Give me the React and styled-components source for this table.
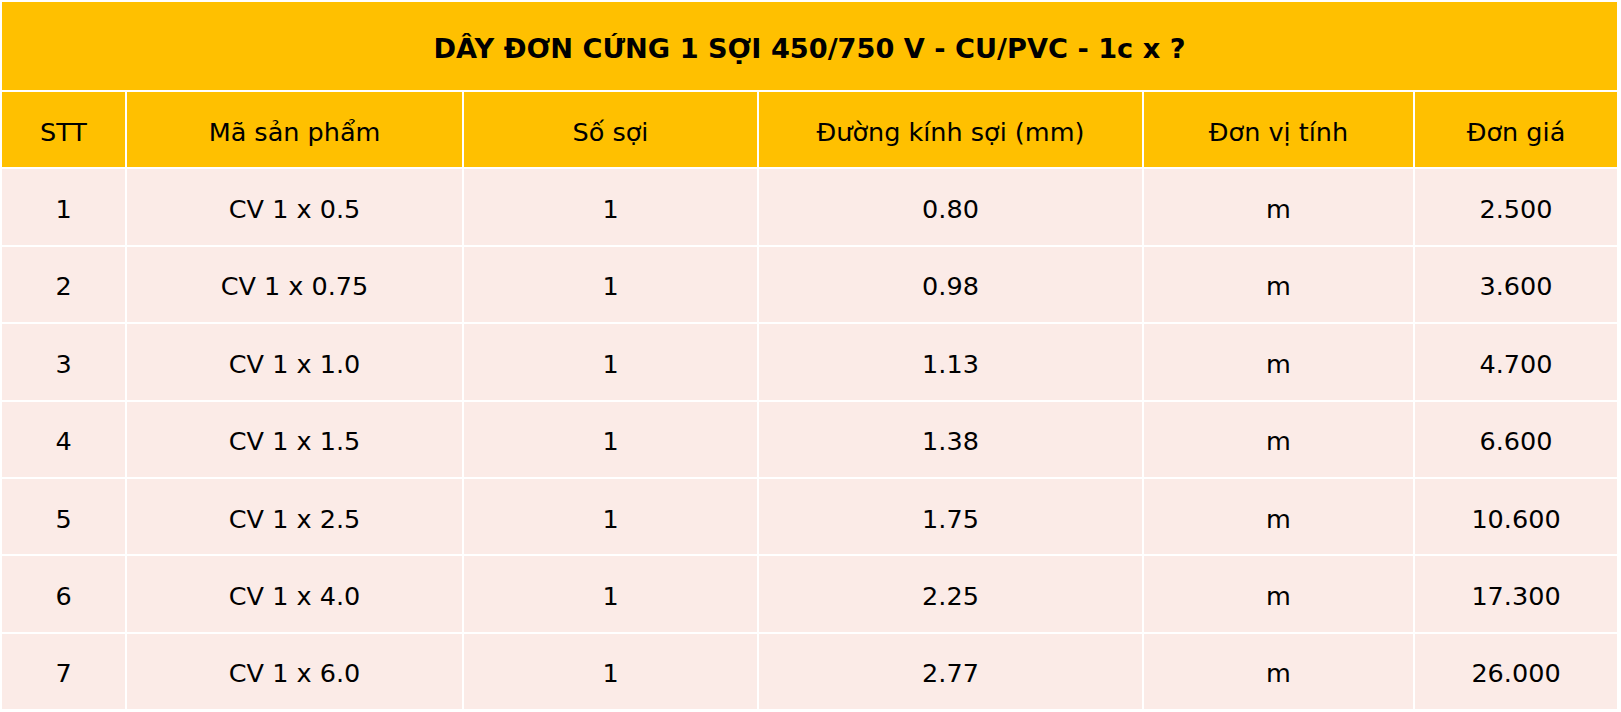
import React from "react";
import styled, { createGlobalStyle } from "styled-components";

const Global = createGlobalStyle`
  html, body { margin: 0; padding: 0; background: #ffffff; }
  body { font-family: "DejaVu Sans", Verdana, sans-serif; color: #000; }
`;

const Table = styled.div`
  display: grid;
  grid-template-columns: 123px 335px 293px 383px 269px 202px;
  grid-template-rows: 88px repeat(8, 75.4px);
  gap: 2px;
  padding: 2px;
  width: max-content;
  background: #ffffff;
`;

const Title = styled.div`
  grid-column: 1 / -1;
  display: flex;
  align-items: center;
  justify-content: center;
  background: #ffc000;
  font-weight: bold;
  font-size: 27.2px;
  padding-top: 4px;
  box-sizing: border-box;
  white-space: nowrap;
`;

const Cell = styled.div`
  display: flex;
  align-items: center;
  justify-content: center;
  background: ${(p) => (p.$head ? "#ffc000" : "#fbebe7")};
  font-size: 25.5px;
  padding-top: 4px;
  box-sizing: border-box;
  white-space: nowrap;
`;

const headers = ["STT", "Mã sản phẩm", "Số sợi", "Đường kính sợi (mm)", "Đơn vị tính", "Đơn giá"];

const rows = [
  ["1", "CV 1 x 0.5", "1", "0.80", "m", "2.500"],
  ["2", "CV 1 x 0.75", "1", "0.98", "m", "3.600"],
  ["3", "CV 1 x 1.0", "1", "1.13", "m", "4.700"],
  ["4", "CV 1 x 1.5", "1", "1.38", "m", "6.600"],
  ["5", "CV 1 x 2.5", "1", "1.75", "m", "10.600"],
  ["6", "CV 1 x 4.0", "1", "2.25", "m", "17.300"],
  ["7", "CV 1 x 6.0", "1", "2.77", "m", "26.000"],
];

export default function App() {
  return (
    <>
      <Global />
      <Table>
        <Title>DÂY ĐƠN CỨNG 1 SỢI 450/750 V - CU/PVC - 1c x ?</Title>
        {headers.map((h) => (
          <Cell key={h} $head>
            {h}
          </Cell>
        ))}
        {rows.map((r, i) =>
          r.map((c, j) => <Cell key={`${i}-${j}`}>{c}</Cell>)
        )}
      </Table>
    </>
  );
}
